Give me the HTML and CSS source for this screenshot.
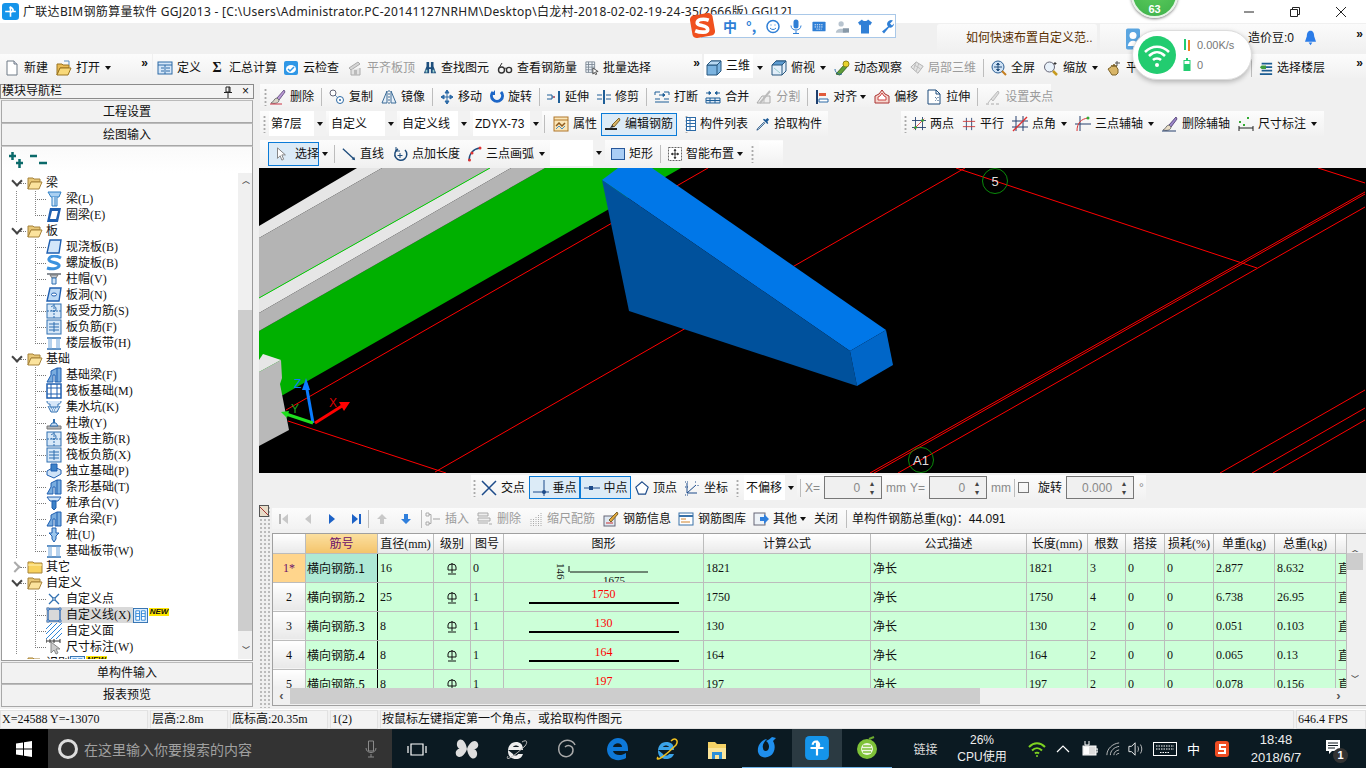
FILE: index.html
```html
<!DOCTYPE html>
<html lang="zh-CN">
<head>
<meta charset="utf-8">
<title>GGJ2013</title>
<link rel="stylesheet" href="styles.css">
</head>
<body>
<svg class="defs" xmlns="http://www.w3.org/2000/svg">
<symbol id="new" viewBox="0 0 16 16"><path d="M3 1h7l3 3v11H3z" fill="#fff" stroke="#6f7a86"/><path d="M10 1v3h3" fill="#dde" stroke="#6f7a86"/></symbol>
<symbol id="open" viewBox="0 0 16 16"><path d="M1 4h5l1 1h6v3H4l-3 7z" fill="#e9bb55" stroke="#9a7420"/><path d="M1 15l3-7h11l-3 7z" fill="#f8d97a" stroke="#9a7420"/><path d="M8 1h5v4" fill="none" stroke="#5a8fc0"/></symbol>
<symbol id="def" viewBox="0 0 16 16"><rect x="1" y="2" width="14" height="12" fill="#d5e6f8" stroke="#2c6aa6"/><path d="M1 5h14M4 8h3M4 11h3M9 8h4M9 11h4M8 5v9" stroke="#2c6aa6" fill="none"/></symbol>
<symbol id="cloud" viewBox="0 0 16 16"><rect x="1" y="1" width="14" height="14" rx="2" fill="#2f97e6"/><ellipse cx="8" cy="9" rx="5" ry="4" fill="#fff"/><path d="M5 9l2 2 4-4" stroke="#2f97e6" stroke-width="1.5" fill="none"/></symbol>
<symbol id="flush" viewBox="0 0 16 16"><path d="M2 8l9-6 2 2-9 6z" fill="#d6d6d6" stroke="#aaa"/><path d="M4 10v5h9V8" fill="#e2e2e2" stroke="#aaa"/><path d="M7 10h3v5H7z" fill="#bbb"/></symbol>
<symbol id="binoc" viewBox="0 0 16 16"><path d="M4 1h3v6h2V1h3v5l3 8H9V9H7v5H1l3-8z" fill="#1e4f7d"/><path d="M3 10h2v3H3zM11 10h2v3h-2z" fill="#9cc"/></symbol>
<symbol id="glass" viewBox="0 0 16 16"><circle cx="4.5" cy="10" r="3" fill="none" stroke="#333" stroke-width="1.4"/><circle cx="12" cy="10" r="2.6" fill="none" stroke="#333" stroke-width="1.4"/><path d="M7 9c1-1 2-1 3 0M2 8l3-5" stroke="#333" fill="none"/></symbol>
<symbol id="batch" viewBox="0 0 16 16"><path d="M1 1h10v12H1zM1 4h10M1 7h10M1 10h10M4 1v12M8 1v12" fill="#eef3f8" stroke="#7b8794"/><path d="M9 8l6 4-3 .5 1.500 2.500-1.500.5-1.500-2.500-1.500 2z" fill="#fff" stroke="#444"/></symbol>
<symbol id="cube" viewBox="0 0 16 16"><path d="M1 5l4-4h10v10l-4 4H1z" fill="#7cb4e0" stroke="#26567f"/><path d="M1 5h10v10M11 5l4-4" fill="none" stroke="#26567f"/><path d="M1 5l4-4h10l-4 4z" fill="#b9d9f2" stroke="#26567f"/></symbol>
<symbol id="cubet" viewBox="0 0 16 16"><path d="M1 5l4-4h10v10l-4 4H1z" fill="#e2eef9" stroke="#26567f"/><path d="M1 5l4-4h10l-4 4z" fill="#5d9bd0" stroke="#26567f"/><path d="M11 5v10" stroke="#26567f" fill="none"/><path d="M3 8l6 5" stroke="#9cc" fill="none"/></symbol>
<symbol id="orbit" viewBox="0 0 16 16"><path d="M2 14L11 4l3 2-8 9z" fill="#5f9e3a" stroke="#3b6a22"/><circle cx="12" cy="4" r="3" fill="#e8d22c" stroke="#8f8416"/><path d="M1 9c0 4 4 6 7 5" stroke="#2a6ea8" fill="none"/></symbol>
<symbol id="cubeg" viewBox="0 0 16 16"><path d="M1 7l6-6 8 5-6 8z" fill="#e3e3e3" stroke="#aaa"/><path d="M4 4l8 5M7 1l-3 9M10 3l-3 9" stroke="#bbb" fill="none"/></symbol>
<symbol id="full" viewBox="0 0 16 16"><circle cx="7" cy="7" r="6" fill="#cfe2f5" stroke="#2c5f94"/><path d="M7 3v8M3 7h8M7 3l-1.500 1.500h3zM7 11l-1.500-1.500h3z" stroke="#24507e" fill="#24507e"/><path d="M11 11l4 4" stroke="#c47d1e" stroke-width="2"/></symbol>
<symbol id="zoom" viewBox="0 0 16 16"><circle cx="6.500" cy="7" r="5" fill="#e8f1fa" stroke="#667"/><path d="M10 11l4 4" stroke="#c79a1e" stroke-width="2.500"/><path d="M12 2v3M10.500 3.500h3" stroke="#333"/></symbol>
<symbol id="hand" viewBox="0 0 16 16"><path d="M2 9l3-2 1-2 1 2 1-3 1 3 1-2 1 3 1 1v4l-2 2H6z" fill="#d8b568" stroke="#7d6228"/><path d="M11 1v5M9 3h5" stroke="#555"/></symbol>
<symbol id="floor" viewBox="0 0 16 16"><path d="M3 3h12M3 7h12M3 11h12M1 15h14" stroke="#1c5d92" stroke-width="2" fill="none"/><path d="M8 5H3l-2 2 2 2h5z" fill="#3d9b3d"/></symbol>
<symbol id="del" viewBox="0 0 16 16"><path d="M14 1L7 9l2 2 6-8z" fill="#bb9ad6" stroke="#6e5a8a"/><path d="M7 9c-3 0-3 4-6 5 4 1 8 0 8-3z" fill="#d9d4c8" stroke="#777"/><path d="M0 15h12" stroke="#c34"/></symbol>
<symbol id="copy" viewBox="0 0 16 16"><circle cx="4" cy="4" r="3" fill="#fff" stroke="#667"/><circle cx="11" cy="11" r="3.500" fill="#fff" stroke="#2c6aa6"/><path d="M6 6l3 3" stroke="#2c6aa6" stroke-dasharray="1 1"/><circle cx="11" cy="11" r="1" fill="#2c6aa6"/></symbol>
<symbol id="mirror" viewBox="0 0 16 16"><path d="M1 14l5-12v12zM15 14L10 2v12z" fill="#e8f1fa" stroke="#3a6a96"/><path d="M8 1v14" stroke="#3a6a96" stroke-dasharray="2 1"/></symbol>
<symbol id="move" viewBox="0 0 14 16"><path d="M7 1v14M1 8h12M7 1L5 4h4zM7 15l-2-3h4zM1 8l3-2v4zM13 8l-3-2v4z" fill="#2c6aa6" stroke="#2c6aa6"/></symbol>
<symbol id="rotate" viewBox="0 0 14 16"><path d="M3 3a5.500 5.500 0 1 0 8 0" fill="none" stroke="#1d66c7" stroke-width="3"/><path d="M5 1v5H1z" fill="#1d66c7"/></symbol>
<symbol id="extend" viewBox="0 0 14 16"><path d="M0 6h5v4H0M8 8H5" stroke="#1e5e97" fill="none"/><path d="M12 2v12" stroke="#1e5e97" stroke-width="2"/><path d="M6 8h2" stroke="#d33"/></symbol>
<symbol id="trim" viewBox="0 0 14 16"><path d="M7 1v14" stroke="#1e5e97" stroke-width="2"/><path d="M0 6h5M0 10h5M9 6h5M9 10h5" stroke="#1e5e97"/></symbol>
<symbol id="brk" viewBox="0 0 16 16"><path d="M1 3h5M10 3h5M1 3v3M15 3v3M1 10h5M10 10h5M1 13h14" stroke="#1e5e97" fill="none"/><path d="M5 6h6M11 6L9 4.500v3z" stroke="#1e5e97" fill="#1e5e97"/></symbol>
<symbol id="merge" viewBox="0 0 16 16"><path d="M1 9h14v5H1zM1 11.500h14M5 9v5M10 9v5" fill="#dbe8f5" stroke="#1e5e97"/><path d="M1 4h5M15 4h-5M6 4L4 2.500v3zM10 4l2-1.500v3z" stroke="#1e5e97" fill="#1e5e97"/></symbol>
<symbol id="split" viewBox="0 0 16 16"><path d="M1 14h13V7H6z" fill="#eee" stroke="#aaa"/><path d="M4 14l10-12" stroke="#bbb" stroke-width="2"/><path d="M8 7v7" stroke="#bbb"/></symbol>
<symbol id="align" viewBox="0 0 14 16"><path d="M2 1v14" stroke="#1e3f6e" stroke-width="2"/><path d="M4 4h7v3H4z" fill="#e05a3a"/><path d="M4 10h9v3H4z" fill="#fff" stroke="#2c6aa6"/></symbol>
<symbol id="offset" viewBox="0 0 16 16"><path d="M8 1l3 4 4 2v7H1V7l4-2z" fill="#f5d5cd" stroke="#a33"/><path d="M8 4l2 3 2 1v3H4V8l2-1z" fill="#fff" stroke="#c44"/></symbol>
<symbol id="stretch" viewBox="0 0 16 16"><path d="M2 1h8l4 4v10H2z" fill="#fff" stroke="#1d4b7b"/><path d="M10 1v4h4" fill="none" stroke="#1d4b7b"/><path d="M9 8l2 2-2 2M12 8v1M12 11v1" stroke="#1d4b7b" fill="none" stroke-dasharray="1 1"/></symbol>
<symbol id="setp" viewBox="0 0 16 16"><path d="M13 2L6 10l2 2 6-8z" fill="#ddd" stroke="#bbb"/><path d="M1 15h3M6 15h3M11 15h3" stroke="#aaa"/><path d="M6 10l-3 4" stroke="#bbb"/></symbol>
<symbol id="attr" viewBox="0 0 16 16"><rect x="1" y="1" width="14" height="14" fill="#fbe6b8" stroke="#b0762a"/><path d="M1 4h14" stroke="#b0762a"/><path d="M3 10l3-3 3 3 3-3" stroke="#8f5a1d" stroke-width="1.500" fill="none"/><path d="M3 13l3-3 3 3 3-3" stroke="#4d8fbf" fill="none"/></symbol>
<symbol id="edit" viewBox="0 0 16 16"><path d="M14 2L7 9l2 2 6-7z" fill="#d8b568" stroke="#7d6228"/><path d="M7 9l-2 3 4-1z" fill="#333"/><path d="M0 13h12" stroke="#222" stroke-width="2"/></symbol>
<symbol id="list" viewBox="0 0 10 16"><rect x=".5" y="1.500" width="9" height="13" fill="#fff" stroke="#2c6aa6"/><path d="M.5 4.500h9M.5 7.500h9M.5 10.500h9M4 1.500v13" stroke="#2c6aa6"/></symbol>
<symbol id="pick" viewBox="0 0 16 16"><path d="M9 6l-7 7-1 2 2-1 7-7z" fill="#dcecf9" stroke="#1d4b7b"/><path d="M8 3l5 5 1-1-1-2 2-2-2-2-2 2-2-1z" fill="#1d5a96"/></symbol>
<symbol id="twop" viewBox="0 0 16 16"><path d="M4 0v15M12 0v15M0 4h16M0 12h16" stroke="#26406e"/><path d="M2 14L14 2" stroke="#d33"/><circle cx="4" cy="12" r="1.500" fill="#3a3"/><circle cx="12" cy="4" r="1.500" fill="#3a3"/></symbol>
<symbol id="para" viewBox="0 0 16 16"><path d="M5 1v14M11 1v14" stroke="#26406e"/><path d="M1 5h14M1 11h14" stroke="#c33"/></symbol>
<symbol id="angle" viewBox="0 0 16 16"><path d="M4 0v15M11 0v15M0 5h16M0 11h16" stroke="#26406e"/><path d="M1 15L15 1" stroke="#d33" stroke-width="1.500"/></symbol>
<symbol id="arc3" viewBox="0 0 16 16"><path d="M5 0v15M0 8h16" stroke="#26406e"/><path d="M2 15c0-8 4-12 11-13" stroke="#d33" fill="none"/><circle cx="13" cy="2" r="1.500" fill="#3a3"/></symbol>
<symbol id="delax" viewBox="0 0 16 16"><path d="M14 1L7 9l2 2 6-8z" fill="#9c86c9" stroke="#5d4b80"/><path d="M7 9c-3 0-3 4-6 5 4 1 8 0 8-3z" fill="#e8dcc4" stroke="#777"/><path d="M0 15h14" stroke="#26406e"/></symbol>
<symbol id="dim" viewBox="0 0 16 16"><path d="M1 12h14M1 10v5M15 10v5" stroke="#222"/><rect x="1" y="5" width="2" height="2" fill="#3a3"/><rect x="9" y="1" width="2" height="2" fill="#3a3"/><rect x="5" y="8" width="2" height="2" fill="#3a3"/></symbol>
<symbol id="cursor" viewBox="0 0 16 16"><path d="M4 1v12l3-3 2 5 2-1-2-5h4z" fill="#fff" stroke="#777"/></symbol>
<symbol id="line" viewBox="0 0 16 16"><path d="M1 2l13 12" stroke="#1d4b7b" stroke-width="1.500"/><path d="M15 15l-4-1 3-3z" fill="#1d4b7b"/></symbol>
<symbol id="ptlen" viewBox="0 0 16 16"><path d="M6 3a6 6 0 1 0 7 1" fill="none" stroke="#1d4b7b" stroke-width="1.500"/><path d="M4 1v4h4" stroke="#1d4b7b" fill="none"/><path d="M8 7v5M5.500 9.500h5" stroke="#1d4b7b"/></symbol>
<symbol id="arc" viewBox="0 0 14 16"><path d="M1 15C1 8 5 3 12 2" stroke="#1d4b7b" stroke-width="1.500" fill="none"/><circle cx="12" cy="2" r="1.500" fill="#d33"/><circle cx="4" cy="7" r="1.500" fill="#d33"/><circle cx="1.500" cy="14" r="1.500" fill="#d33"/></symbol>
<symbol id="rect" viewBox="0 0 14 16"><rect x="0.500" y="2.500" width="13" height="11" fill="#a9cdf5" stroke="#26579a"/></symbol>
<symbol id="smart" viewBox="0 0 14 16"><rect x="0.500" y="1.500" width="13" height="13" fill="#fff" stroke="#666" stroke-dasharray="2 1"/><path d="M7 3v10M3 8h8" stroke="#333"/><path d="M7 3L5.500 5h3zM7 13l-1.500-2h3zM3 8l2-1.500v3zM11 8L9 6.500v3z" fill="#333"/></symbol>
<symbol id="cross" viewBox="0 0 16 16"><path d="M1 1l14 14M15 1L1 15" stroke="#1d4b8a" stroke-width="1.500"/></symbol>
<symbol id="perp" viewBox="0 0 16 16"><path d="M0 12h16M11 0v16" stroke="#1d4b8a"/><circle cx="11" cy="12" r="2" fill="#1d4b8a"/></symbol>
<symbol id="mid" viewBox="0 0 16 16"><path d="M0 8h16" stroke="#1d4b8a"/><rect x="5" y="6" width="4" height="4" fill="#1d4b8a"/></symbol>
<symbol id="vert" viewBox="0 0 16 16"><path d="M8 1l7 6-3 8H4L1 7z" fill="#fff" stroke="#1d4b8a" stroke-width="1.400"/></symbol>
<symbol id="coord" viewBox="0 0 16 16"><path d="M3 13h10M3 3v10M3 13L12 5" stroke="#1d4b8a" fill="none"/><path d="M1 2h3M1 7h3M1 15h3M11 2h2M14 5v2" stroke="#1d4b8a" stroke-dasharray="1 1"/></symbol>
<symbol id="folder" viewBox="0 0 16 14"><path d="M1 2h5l1 1h6v3H4L1 13z" fill="#e8c777" stroke="#a6833b"/><path d="M1 13l3-7h11l-3 7z" fill="#fbe39d" stroke="#a6833b"/></symbol>
<symbol id="folderc" viewBox="0 0 16 14"><path d="M1 2h5l1 1h8v10H1z" fill="#f8d25e" stroke="#a6833b"/><path d="M1 5h14" stroke="#fff3b8"/></symbol>
<symbol id="beam" viewBox="0 0 16 16"><path d="M2 1h13l-2 5H5z" fill="#a9d0f2" stroke="#2f7fc4"/><path d="M6 6v9h5V6" fill="#d9ebfa" stroke="#2f7fc4"/><path d="M9 6v9" stroke="#2f7fc4"/></symbol>
<symbol id="ring" viewBox="0 0 16 16"><path d="M4 1h11l-3 14H1z" fill="#1f5fb0"/><path d="M6 4h6l-2 8H4z" fill="#fff"/></symbol>
<symbol id="slab" viewBox="0 0 16 16"><path d="M4 1h11l-2 13H1z" fill="#d3e6f9" stroke="#1f5fb0" stroke-width="1.400"/></symbol>
<symbol id="spiral" viewBox="0 0 16 16"><path d="M15 3C8-1 2 2 3 5c1 3 8 2 10 5 1 3-6 5-12 3" fill="none" stroke="#3c92de" stroke-width="3"/></symbol>
<symbol id="cap" viewBox="0 0 16 16"><path d="M1 2h14v2H1z" fill="#8a8f96"/><path d="M4 4h8l-2 3H6z" fill="#c5c9ce" stroke="#777"/><path d="M6 7h4v6H6z" fill="#cfe3f7" stroke="#2f6fb0"/></symbol>
<symbol id="hole" viewBox="0 0 16 16"><path d="M4 1h11l-2 13H1z" fill="#bcd9f5" stroke="#1f5fb0" stroke-width="1.400"/><ellipse cx="8" cy="7.500" rx="2.500" ry="1.500" fill="#fff" stroke="#1f5fb0"/></symbol>
<symbol id="sfr" viewBox="0 0 16 16"><rect x="1" y="1" width="14" height="14" fill="#d7e8f8" stroke="#2f6fb0"/><path d="M8 1v14M1 8h14" stroke="#2f6fb0" stroke-dasharray="2 1"/><path d="M5 4c2-2 5-1 5 2s-3 3-5 1" fill="none" stroke="#2f6fb0"/></symbol>
<symbol id="nfr" viewBox="0 0 16 16"><rect x="1" y="1" width="14" height="14" fill="#d7e8f8" stroke="#2f6fb0"/><path d="M3 8h10M8 3v10M3 5h10M3 11h10" stroke="#2f6fb0"/></symbol>
<symbol id="band" viewBox="0 0 16 16"><path d="M1 3h14M1 14h14" stroke="#2f6fb0" stroke-width="1.500"/><path d="M5 3v11M11 3v11M3 3v11M13 3v11" stroke="#6ea5dc"/></symbol>
<symbol id="fbeam" viewBox="0 0 16 16"><path d="M1 15l4-7V4l6-3h4v14H9V8H7v7z" fill="#79acde" stroke="#1f5fb0"/><path d="M11 1v14" stroke="#1f5fb0"/></symbol>
<symbol id="raft" viewBox="0 0 16 16"><rect x="1" y="1" width="14" height="14" fill="#fff" stroke="#1f5fb0" stroke-width="1.500"/><path d="M5 1v14M11 1v14M1 5h14M1 11h14" stroke="#1f5fb0"/></symbol>
<symbol id="pit" viewBox="0 0 16 16"><path d="M1 2c0 3 2 3 3 3v3h8V5c1 0 3 0 3-3M2 7l3 6h6l3-6" fill="#d5e6f8" stroke="#2f6fb0"/><path d="M5 9h6M6 11h4" stroke="#2f6fb0" stroke-dasharray="1 1"/></symbol>
<symbol id="pier" viewBox="0 0 16 16"><path d="M1 11h14v3H1z" fill="#b4b7bb" stroke="#777"/><path d="M4 11l2-3h4l2 3z" fill="#cfe3f7" stroke="#2f6fb0"/><path d="M7 4h2v4H7z" fill="#2f6fb0"/></symbol>
<symbol id="iso" viewBox="0 0 16 16"><path d="M1 8l7-4 7 3v4l-7 4-7-3z" fill="#cfe3f7" stroke="#1f5fb0"/><path d="M5 1h6v7H5z" fill="#3d82c8" stroke="#1f5fb0"/></symbol>
<symbol id="pcap" viewBox="0 0 16 16"><path d="M1 2h14l-3 4H4z" fill="#cfe3f7" stroke="#1f5fb0"/><path d="M6 6h4v7l-2 2-2-2z" fill="#3d82c8" stroke="#1f5fb0"/></symbol>
<symbol id="pile" viewBox="0 0 16 16"><path d="M6 1h4v5h3l-3 3v3l-2 3-2-3V9L3 6h3z" fill="#9cc6ec" stroke="#1f5fb0"/></symbol>
<symbol id="pt" viewBox="0 0 16 16"><path d="M3 3l10 10M13 3L3 13" stroke="#2f6fb0" stroke-width="1.300"/><circle cx="8" cy="8" r="1.300" fill="#fff" stroke="#2f6fb0"/></symbol>
<symbol id="cline" viewBox="0 0 16 16"><rect x="2" y="2" width="12" height="12" fill="none" stroke="#1f5fb0" stroke-width="1.200"/><path d="M1 1h2v2H1zM13 1h2v2h-2zM1 13h2v2H1zM13 13h2v2h-2z" fill="#fff" stroke="#1f5fb0" stroke-width=".8"/></symbol>
<symbol id="cface" viewBox="0 0 16 16"><path d="M0 6l6-6M0 11L11 0M0 16L16 0M5 16L16 5M10 16l6-6" stroke="#2f86d8"/></symbol>
<symbol id="cdim" viewBox="0 0 16 16"><path d="M0 2h14M0 0v4M14 0v4M4 0v4M8 0v4" stroke="#333"/><path d="M5 3v11l3-3 2 4 2-1-2-4h4z" fill="#ccc" stroke="#888"/></symbol>
<symbol id="mini" viewBox="0 0 16 16"><rect x=".5" y=".5" width="15" height="15" fill="#dceeff" stroke="#2f6fb0"/><path d="M3 3h4v10H3zM9 3h4v10H9z" fill="#fff" stroke="#2f86d8"/><path d="M3 6h4M3 9h4M9 6h4M9 9h4" stroke="#2f86d8"/></symbol>
<symbol id="first" viewBox="0 0 12 12"><path d="M2 1v10" stroke="#b8b8b8" stroke-width="2"/><path d="M10 1v10L4 6z" fill="#c8c8c8"/></symbol>
<symbol id="prev" viewBox="0 0 12 12"><path d="M9 1v10L3 6z" fill="#c8c8c8"/></symbol>
<symbol id="next" viewBox="0 0 12 12"><path d="M3 1v10l6-5z" fill="#1d62c6"/></symbol>
<symbol id="last" viewBox="0 0 12 12"><path d="M10 1v10" stroke="#1d62c6" stroke-width="2"/><path d="M2 1v10l6-5z" fill="#1d62c6"/></symbol>
<symbol id="up" viewBox="0 0 12 12"><path d="M6 1l5 5H8v5H4V6H1z" fill="#c8c8c8"/></symbol>
<symbol id="down" viewBox="0 0 12 12"><path d="M6 11l5-5H8V1H4v5H1z" fill="#2f7fdc"/></symbol>
<symbol id="ins" viewBox="0 0 16 16"><path d="M1 2h3v3H1zM1 11h3v3H1z" fill="none" stroke="#aaa"/><path d="M4 3.500h2v9H4" fill="none" stroke="#aaa"/><path d="M8 7h7v2H8z" fill="#ccc"/></symbol>
<symbol id="del2" viewBox="0 0 16 16"><path d="M1 2h10v3H1zM1 7h12v3H1zM1 12h10" fill="#eee" stroke="#aaa"/><path d="M12 13h3" stroke="#aaa"/></symbol>
<symbol id="scale" viewBox="0 0 12 16"><path d="M1 15V8M3.500 15V7M6 15V5M8.500 15V3M11 15V1" stroke="#aaa" stroke-dasharray="1 1"/></symbol>
<symbol id="info" viewBox="0 0 16 16"><rect x="1" y="5" width="11" height="10" fill="#dfe8f2" stroke="#667"/><path d="M14 1L6 9l2 2 7-8z" fill="#e0a73b" stroke="#7d6228"/><path d="M3 12h7" stroke="#c33"/></symbol>
<symbol id="lib" viewBox="0 0 16 16"><rect x="1" y="2" width="14" height="12" fill="#fff" stroke="#3a72a8"/><path d="M1 5h14" stroke="#3a72a8" stroke-width="2"/><path d="M3 8h5M3 11h9" stroke="#d0842c"/></symbol>
<symbol id="other" viewBox="0 0 16 16"><rect x="1" y="2" width="11" height="12" fill="#eef3f8" stroke="#667"/><path d="M7 6h4V3l5 5-5 5v-3H7z" fill="#2f7fdc"/></symbol>
</svg>

<header class="titlebar">
  <svg class="applogo" viewBox="0 0 16 16"><rect width="16" height="16" rx="3" fill="#1594ea"/><path d="M8 3v10M3 8h4a2 2 0 1 0 0-3M13 8H9" stroke="#fff" stroke-width="1.500" fill="none"/></svg>
  <span class="apptitle">广联达BIM钢筋算量软件 GGJ2013 - [C:\Users\Administrator.PC-20141127NRHM\Desktop\白龙村-2018-02-02-19-24-35(2666版).GGJ12]</span>
  <div class="winctl">
    <svg class="wbtn" viewBox="0 0 12 12"><path d="M1 6h10" stroke="#222"/></svg>
    <svg class="wbtn" viewBox="0 0 12 12"><path d="M1.500 3.500h7v7h-7zM3.500 3.500v-2h7v7h-2" fill="none" stroke="#222"/></svg>
    <svg class="wbtn" viewBox="0 0 12 12"><path d="M1 1l10 10M11 1L1 11" stroke="#222"/></svg>
  </div>
</header>

<div class="topband">
  <div class="newstab">如何快速布置自定义范..</div>
  <div class="coins">
    <svg class="userbadge" viewBox="0 0 16 24"><rect width="16" height="24" rx="2" fill="#5aa5e0"/><circle cx="8" cy="8" r="4" fill="#fff"/><path d="M2 20c1-8 11-8 12 0z" fill="#fff"/></svg>
    <span class="coinlabel">造价豆:0</span>
    <svg class="bell" viewBox="0 0 12 16"><path d="M6 0c3 0 4 3 4 6l2 6H0l2-6c0-3 1-6 4-6zM4 13h4l-2 3z" fill="#2b7ce8"/></svg>
    <span class="more morer">»</span>
  </div>
</div>

<div class="tb1">
  <div class="grp g-a">
    <span class="it"><svg class="ic"><use href="#new"/></svg>新建</span>
    <span class="it"><svg class="ic"><use href="#open"/></svg>打开<i class="ar"></i></span>
    <span class="more">»</span>
  </div>
  <div class="grp g-b">
    <span class="it"><svg class="ic"><use href="#def"/></svg>定义</span>
    <span class="it"><span class="ic sigma">Σ</span>汇总计算</span>
    <span class="it mln2"><svg class="ic"><use href="#cloud"/></svg>云检查</span>
    <span class="it off"><svg class="ic"><use href="#flush"/></svg>平齐板顶</span>
    <span class="it"><svg class="ic n"><use href="#binoc"/></svg>查找图元</span>
    <span class="it"><svg class="ic"><use href="#glass"/></svg>查看钢筋量</span>
    <span class="it"><svg class="ic n"><use href="#batch"/></svg>批量选择</span>
    <span class="more">»</span>
  </div>
  <div class="grp g-c">
    <span class="it fieldit"><svg class="ic"><use href="#cube"/></svg>三维</span><i class="ar ar-b"></i>
    <span class="it"><svg class="ic"><use href="#cubet"/></svg>俯视<i class="ar"></i></span>
    <span class="it"><svg class="ic"><use href="#orbit"/></svg>动态观察</span>
    <span class="it off"><svg class="ic n"><use href="#cubeg"/></svg>局部三维</span>
    <i class="sep"></i>
    <span class="it"><svg class="ic"><use href="#full"/></svg>全屏</span>
    <span class="it"><svg class="ic"><use href="#zoom"/></svg>缩放<i class="ar"></i></span>
    <span class="it"><svg class="ic"><use href="#hand"/></svg>平移</span>
    <i class="sep floorsep"></i>
    <span class="it"><svg class="ic n"><use href="#floor"/></svg>选择楼层</span>
    <span class="more">»</span>
  </div>
</div>

<main class="main">
  <aside class="side">
    <div class="navtitle"><span>模块导航栏</span><span class="navbtns"><svg class="pin" viewBox="0 0 10 12"><path d="M3 1h4v5H3zM1 6.500h8M5 7v5M6 1v5" fill="none" stroke="#222"/></svg><b>×</b></span></div>
    <div class="navbtn">工程设置</div>
    <div class="navbtn">绘图输入</div>
    <div class="treebox">
      <div class="treetools">
        <svg class="tt" viewBox="0 0 20 16"><path d="M3 4h7M6.500 0v8M10 11h7M13.500 7v9" stroke="#0b6a6a" stroke-width="2.500"/></svg>
        <svg class="tt" viewBox="0 0 20 16"><path d="M1 4h7M10 11h8" stroke="#0b6a6a" stroke-width="2.500"/></svg>
      </div>
      <div class="treearea">
        <div class="tree">
          <div class="pnode"><span class="chev"></span><i class="hc"></i><svg class="fld"><use href="#folder"/></svg>梁</div>
          <div class="kids">
            <div class="leaf"><i class="conn"></i><svg class="lic"><use href="#beam"/></svg>梁(L)</div>
            <div class="leaf last"><i class="conn"></i><svg class="lic"><use href="#ring"/></svg>圈梁(E)</div>
          </div>
          <div class="pnode"><span class="chev"></span><i class="hc"></i><svg class="fld"><use href="#folder"/></svg>板</div>
          <div class="kids">
            <div class="leaf"><i class="conn"></i><svg class="lic"><use href="#slab"/></svg>现浇板(B)</div>
            <div class="leaf"><i class="conn"></i><svg class="lic"><use href="#spiral"/></svg>螺旋板(B)</div>
            <div class="leaf"><i class="conn"></i><svg class="lic"><use href="#cap"/></svg>柱帽(V)</div>
            <div class="leaf"><i class="conn"></i><svg class="lic"><use href="#hole"/></svg>板洞(N)</div>
            <div class="leaf"><i class="conn"></i><svg class="lic"><use href="#sfr"/></svg>板受力筋(S)</div>
            <div class="leaf"><i class="conn"></i><svg class="lic"><use href="#nfr"/></svg>板负筋(F)</div>
            <div class="leaf last"><i class="conn"></i><svg class="lic"><use href="#band"/></svg>楼层板带(H)</div>
          </div>
          <div class="pnode"><span class="chev"></span><i class="hc"></i><svg class="fld"><use href="#folder"/></svg>基础</div>
          <div class="kids">
            <div class="leaf"><i class="conn"></i><svg class="lic"><use href="#fbeam"/></svg>基础梁(F)</div>
            <div class="leaf"><i class="conn"></i><svg class="lic"><use href="#raft"/></svg>筏板基础(M)</div>
            <div class="leaf"><i class="conn"></i><svg class="lic"><use href="#pit"/></svg>集水坑(K)</div>
            <div class="leaf"><i class="conn"></i><svg class="lic"><use href="#pier"/></svg>柱墩(Y)</div>
            <div class="leaf"><i class="conn"></i><svg class="lic"><use href="#sfr"/></svg>筏板主筋(R)</div>
            <div class="leaf"><i class="conn"></i><svg class="lic"><use href="#nfr"/></svg>筏板负筋(X)</div>
            <div class="leaf"><i class="conn"></i><svg class="lic"><use href="#iso"/></svg>独立基础(P)</div>
            <div class="leaf"><i class="conn"></i><svg class="lic"><use href="#fbeam"/></svg>条形基础(T)</div>
            <div class="leaf"><i class="conn"></i><svg class="lic"><use href="#pcap"/></svg>桩承台(V)</div>
            <div class="leaf"><i class="conn"></i><svg class="lic"><use href="#fbeam"/></svg>承台梁(F)</div>
            <div class="leaf"><i class="conn"></i><svg class="lic"><use href="#pile"/></svg>桩(U)</div>
            <div class="leaf last"><i class="conn"></i><svg class="lic"><use href="#band"/></svg>基础板带(W)</div>
          </div>
          <div class="pnode"><span class="chev closed"></span><i class="hc"></i><svg class="fld"><use href="#folderc"/></svg>其它</div>
          <div class="pnode"><span class="chev"></span><i class="hc"></i><svg class="fld"><use href="#folder"/></svg>自定义</div>
          <div class="kids">
            <div class="leaf"><i class="conn"></i><svg class="lic"><use href="#pt"/></svg>自定义点</div>
            <div class="leaf"><i class="conn"></i><span class="selrow"><svg class="lic"><use href="#cline"/></svg>自定义线(X)</span><svg class="minii"><use href="#mini"/></svg><span class="newtag">NEW</span></div>
            <div class="leaf"><i class="conn"></i><svg class="lic"><use href="#cface"/></svg>自定义面</div>
            <div class="leaf last"><i class="conn"></i><svg class="lic"><use href="#cdim"/></svg>尺寸标注(W)</div>
          </div>
          <div class="pnode"><span class="chev"></span><i class="hc"></i><svg class="fld"><use href="#folder"/></svg>识别<svg class="minii"><use href="#mini"/></svg><span class="newtag">NEW</span></div>
        </div>
        <div class="vbar">
          <span class="up-a">︿</span>
          <div class="vtrack"><div class="vthumb"></div></div>
          <span class="dn-a">﹀</span>
        </div>
      </div>
    </div>
    <div class="navbtn lowerbtn">单构件输入</div>
    <div class="navbtn lowerbtn">报表预览</div>
  </aside>

  <section class="work">
    <div class="row2">
      <div class="grp g-edit">
        <i class="grip"></i>
        <span class="it"><svg class="ic"><use href="#del"/></svg>删除</span><i class="sep"></i>
        <span class="it"><svg class="ic"><use href="#copy"/></svg>复制</span>
        <span class="it"><svg class="ic"><use href="#mirror"/></svg>镜像</span><i class="sep"></i>
        <span class="it"><svg class="ic n"><use href="#move"/></svg>移动</span>
        <span class="it"><svg class="ic n"><use href="#rotate"/></svg>旋转</span><i class="sep"></i>
        <span class="it"><svg class="ic n"><use href="#extend"/></svg>延伸</span>
        <span class="it"><svg class="ic n"><use href="#trim"/></svg>修剪</span><i class="sep"></i>
        <span class="it"><svg class="ic"><use href="#brk"/></svg>打断</span>
        <span class="it mln1"><svg class="ic"><use href="#merge"/></svg>合并</span>
        <span class="it off mln1"><svg class="ic"><use href="#split"/></svg>分割</span><i class="sep"></i>
        <span class="it"><svg class="ic n"><use href="#align"/></svg>对齐<i class="ar tight"></i></span>
        <span class="it"><svg class="ic"><use href="#offset"/></svg>偏移</span>
        <span class="it"><svg class="ic"><use href="#stretch"/></svg>拉伸</span><i class="sep"></i>
        <span class="it off"><svg class="ic"><use href="#setp"/></svg>设置夹点</span>
      </div>
    </div>
    <div class="row3">
      <div class="grp g-layer">
        <i class="grip grip-first"></i>
        <span class="combo c1"><span class="cv">第7层</span><span class="ca"><i class="ar"></i></span></span>
        <span class="combo c2"><span class="cv">自定义</span><span class="ca"><i class="ar"></i></span></span>
        <span class="combo c6"><span class="cv">自定义线</span><span class="ca"><i class="ar"></i></span></span>
        <span class="combo c3"><span class="cv">ZDYX-73</span><span class="ca"><i class="ar"></i></span></span>
        <i class="sep"></i>
        <span class="it"><svg class="ic"><use href="#attr"/></svg>属性</span>
        <span class="it toggled"><svg class="ic"><use href="#edit"/></svg>编辑钢筋</span>
        <i class="grip"></i>
        <span class="it listit"><svg class="ic x10"><use href="#list"/></svg>构件列表</span>
        <span class="it"><svg class="ic n"><use href="#pick"/></svg>拾取构件</span>
      </div>
      <div class="grp g-axis">
        <i class="grip"></i>
        <span class="it axisfirst"><svg class="ic n"><use href="#twop"/></svg>两点</span>
        <span class="it"><svg class="ic n"><use href="#para"/></svg>平行</span>
        <span class="it"><svg class="ic"><use href="#angle"/></svg>点角<i class="ar"></i></span>
        <span class="it"><svg class="ic"><use href="#arc3"/></svg>三点辅轴<i class="ar"></i></span>
        <span class="it"><svg class="ic"><use href="#delax"/></svg>删除辅轴</span>
        <span class="it"><svg class="ic"><use href="#dim"/></svg>尺寸标注<i class="ar"></i></span>
      </div>
    </div>
    <div class="row4">
      <div class="grp g-draw">
        <span class="it toggled sel-btn"><svg class="ic n"><use href="#cursor"/></svg>选择</span><i class="ar ar-s"></i><i class="sep"></i>
        <span class="it"><svg class="ic n"><use href="#line"/></svg>直线</span>
        <span class="it"><svg class="ic"><use href="#ptlen"/></svg>点加长度</span>
        <span class="it"><svg class="ic n"><use href="#arc"/></svg>三点画弧<i class="ar"></i></span>
        <span class="combo c4"><span class="cv"></span><span class="ca"><i class="ar"></i></span></span>
        <span class="it"><svg class="ic n"><use href="#rect"/></svg>矩形</span><i class="sep"></i>
        <span class="it"><svg class="ic n"><use href="#smart"/></svg>智能布置<i class="ar tight"></i></span>
        <i class="grip"></i><span class="blankbox"></span>
      </div>
    </div>

    <svg class="canvas" viewBox="259 168 1107 305" xmlns="http://www.w3.org/2000/svg">
      <rect x="259" y="168" width="1107" height="305" fill="#000"/>
      <g stroke="#f00" stroke-width="1" fill="none">
        <path d="M286 410L708 168M435 472L965 168M288 421L446 473M956 168L1257 268M1318 168L1365 183"/>
        <path d="M870 473L1365 192M874 473L1365 194M898 473L1365 207M1220 473L1365 390M1252 473L1365 408M1273 473L1365 420"/>
      </g>
      <path d="M545 168H681L283 395 262 400 259 402V331z" fill="#00b000"/>
      <path d="M259 226L357 168H382L259 238z" fill="#e6e6e6"/>
      <path d="M259 238L382 168H490L259 298z" fill="#b4b4b4"/>
      <path d="M259 298L490 168H511L259 313z" fill="#e6e6e6"/>
      <path d="M259 313L511 168H545L259 331z" fill="#b4b4b4"/>
      <path d="M259 298L490 168" stroke="#00d000" stroke-width="1"/>
      <path d="M259 360L263 354 281 360 259 372z" fill="#e6e6e6"/>
      <path d="M259 372L281 360 282 378 280 384 289 430 259 446z" fill="#b9b9b9"/>
      <path d="M602 180L618 168H652L886 330 850 351z" fill="#0077e8"/>
      <path d="M602 180L850 351 857 386 629 311z" fill="#00519c"/>
      <path d="M850 351L886 330 893 365 857 386z" fill="#0066c8"/>
      <path d="M313 423L306 384" stroke="#0a7cff" stroke-width="3"/>
      <path d="M306 378L302 390H310z" fill="#0a7cff"/>
      <path d="M315 423L342 406" stroke="#f00" stroke-width="3"/>
      <path d="M350 402L339 402 344 411z" fill="#f00"/>
      <path d="M313 423L286 414" stroke="#1fe01f" stroke-width="3"/>
      <path d="M281 412L289 411 287 418z" fill="#1fe01f"/>
      <text x="294" y="388" class="ax axz">Z</text>
      <text x="291" y="413" class="ax axy">Y</text>
      <text x="329" y="407" class="ax axx">X</text>
      <circle cx="995" cy="181" r="12.500" fill="none" stroke="#0a8a0a"/>
      <text x="995" y="186" class="gridlabel">5</text>
      <circle cx="921" cy="460" r="12.500" fill="none" stroke="#0a8a0a"/>
      <text x="921" y="465" class="gridlabel">A1</text>
    </svg>

    <div class="snapwrap">
      <div class="grp g-snap">
        <i class="grip"></i>
        <span class="it"><svg class="ic"><use href="#cross"/></svg>交点</span>
        <span class="it toggled sn"><svg class="ic"><use href="#perp"/></svg>垂点</span>
        <span class="it toggled sn"><svg class="ic"><use href="#mid"/></svg>中点</span>
        <span class="it"><svg class="ic n"><use href="#vert"/></svg>顶点</span>
        <span class="it coordit"><svg class="ic"><use href="#coord"/></svg>坐标</span>
        <i class="grip gs2"></i>
        <span class="combo c5"><span class="cv">不偏移</span><span class="ca"><i class="ar"></i></span></span>
        <i class="sep"></i>
        <span class="lbl xlbl">X=</span><span class="spin w58"><span class="spv">0</span><span class="spa"><i>▴</i><i>▾</i></span></span>
        <span class="lbl">mm</span><span class="lbl">Y=</span><span class="spin w58"><span class="spv">0</span><span class="spa"><i>▴</i><i>▾</i></span></span>
        <span class="lbl">mm</span><i class="sep"></i><i class="chk"></i>
        <span class="rotlbl">旋转</span><span class="spin w68"><span class="spv">0.000</span><span class="spa"><i>▴</i><i>▾</i></span></span>
        <span class="lbl deg">°</span>
      </div>
    </div>

    <div class="lower">
      <div class="gutter"><span class="gutx"></span></div>
      <div class="lowermain">
        <div class="grp g-bar">
          <svg class="ic12"><use href="#first"/></svg>
          <svg class="ic12"><use href="#prev"/></svg>
          <svg class="ic12"><use href="#next"/></svg>
          <svg class="ic12"><use href="#last"/></svg>
          <i class="sep s1"></i>
          <svg class="ic12"><use href="#up"/></svg>
          <svg class="ic12"><use href="#down"/></svg>
          <i class="sep s2"></i>
          <span class="it off"><svg class="ic"><use href="#ins"/></svg>插入</span>
          <span class="it off"><svg class="ic"><use href="#del2"/></svg>删除</span>
          <span class="it off"><svg class="ic n"><use href="#scale"/></svg>缩尺配筋</span>
          <span class="it"><svg class="ic"><use href="#info"/></svg>钢筋信息</span>
          <span class="it mln1"><svg class="ic"><use href="#lib"/></svg>钢筋图库</span>
          <span class="it mln1"><svg class="ic"><use href="#other"/></svg>其他<i class="ar tight"></i></span>
          <span class="it">关闭</span>
          <i class="sep s3"></i>
          <span class="it total">单构件钢筋总重(kg)：44.091</span>
        </div>
        <div class="gridframe">
          <div class="gridtop">
            <div class="gridclip">
              <table class="grid">
                <colgroup>
                  <col class="c33"><col class="c72"><col class="c56"><col class="c37"><col class="c33"><col class="c200"><col class="c167"><col class="c156"><col class="c61"><col class="c38"><col class="c39"><col class="c49"><col class="c61"><col class="c61"><col class="c11">
                </colgroup>
                <thead>
                  <tr><th></th><th class="hsel">筋号</th><th>直径(mm)</th><th>级别</th><th>图号</th><th>图形</th><th>计算公式</th><th>公式描述</th><th>长度(mm)</th><th>根数</th><th>搭接</th><th>损耗(%)</th><th>单重(kg)</th><th>总重(kg)</th><th></th></tr>
                </thead>
                <tbody>
                  <tr class="r1"><th class="rh rhsel">1*</th><td class="name namesel">横向钢筋.1</td><td>16</td><td class="g"><svg class="gr" viewBox="0 0 12 12"><path d="M2 7V4a4 3 0 0 1 8 0v3zM6 0v10M2 11h8" fill="none" stroke="#111"/></svg></td><td>0</td>
                    <td class="sh"><svg class="shape" viewBox="0 0 200 28"><text transform="translate(53 9) rotate(90)" class="s1">146</text><path d="M65 12v6M66 18h78" stroke="#111" fill="none"/><text x="110" y="30" class="s1 mid">1675</text></svg></td>
                    <td>1821</td><td class="cn">净长</td><td>1821</td><td>3</td><td>0</td><td>0</td><td>2.877</td><td>8.632</td><td class="cn">直筋</td></tr>
                  <tr class="r2"><th class="rh">2</th><td class="name">横向钢筋.2</td><td>25</td><td class="g"><svg class="gr" viewBox="0 0 12 12"><path d="M2 7V4a4 3 0 0 1 8 0v3zM6 0v10M2 11h8" fill="none" stroke="#111"/></svg></td><td>1</td>
                    <td class="sh"><div class="barv">1750</div><div class="bar"></div></td>
                    <td>1750</td><td class="cn">净长</td><td>1750</td><td>4</td><td>0</td><td>0</td><td>6.738</td><td>26.95</td><td class="cn">直筋</td></tr>
                  <tr class="r2"><th class="rh">3</th><td class="name">横向钢筋.3</td><td>8</td><td class="g"><svg class="gr" viewBox="0 0 12 12"><path d="M2 7V4a4 3 0 0 1 8 0v3zM6 0v10M2 11h8" fill="none" stroke="#111"/></svg></td><td>1</td>
                    <td class="sh"><div class="barv">130</div><div class="bar"></div></td>
                    <td>130</td><td class="cn">净长</td><td>130</td><td>2</td><td>0</td><td>0</td><td>0.051</td><td>0.103</td><td class="cn">直筋</td></tr>
                  <tr class="r2"><th class="rh">4</th><td class="name">横向钢筋.4</td><td>8</td><td class="g"><svg class="gr" viewBox="0 0 12 12"><path d="M2 7V4a4 3 0 0 1 8 0v3zM6 0v10M2 11h8" fill="none" stroke="#111"/></svg></td><td>1</td>
                    <td class="sh"><div class="barv">164</div><div class="bar"></div></td>
                    <td>164</td><td class="cn">净长</td><td>164</td><td>2</td><td>0</td><td>0</td><td>0.065</td><td>0.13</td><td class="cn">直筋</td></tr>
                  <tr class="r2"><th class="rh">5</th><td class="name">横向钢筋.5</td><td>8</td><td class="g"><svg class="gr" viewBox="0 0 12 12"><path d="M2 7V4a4 3 0 0 1 8 0v3zM6 0v10M2 11h8" fill="none" stroke="#111"/></svg></td><td>1</td>
                    <td class="sh"><div class="barv">197</div><div class="bar"></div></td>
                    <td>197</td><td class="cn">净长</td><td>197</td><td>2</td><td>0</td><td>0</td><td>0.078</td><td>0.156</td><td class="cn">直筋</td></tr>
                </tbody>
              </table>
            </div>
            <div class="gvbar"><span class="up-a">︿</span><div class="gvthumb"></div><span class="dn-a">﹀</span></div>
          </div>
          <div class="ghbar"><span class="harrow">‹</span><div class="ghthumb"></div><span class="harrow harr-r">›</span></div>
        </div>
      </div>
    </div>
  </section>
</main>

<div class="status">
  <span class="st st1">X=24588 Y=-13070</span>
  <span class="st st2">层高:2.8m</span>
  <span class="st st3">底标高:20.35m</span>
  <span class="st st4">1(2)</span>
  <span class="st st5">按鼠标左键指定第一个角点，或拾取构件图元</span>
  <span class="st st6">646.4 FPS</span>
</div>

<footer class="taskbar">
  <div class="startbtn"><svg class="winlogo" viewBox="0 0 16 16"><path d="M0 2.500l7-1v6H0zM8 1.300l8-1.200V7.500H8zM0 8.500h7v6l-7-1zM8 8.500h8v7.400l-8-1.200z" fill="#fff"/></svg></div>
  <div class="search">
    <i class="cortana"></i><span class="searchtext">在这里输入你要搜索的内容</span>
    <svg class="searchmic" viewBox="0 0 12 18"><path d="M3.500 1h5v10h-5zM1 8c0 6 10 6 10 0M6 14v3M3 17h6" fill="none" stroke="#8a8a8a"/></svg>
  </div>
  <div class="tile"><svg class="ti" viewBox="0 0 24 24"><path d="M6 7h12v11H6zM3 9v7M21 9v7" fill="none" stroke="#fff" stroke-width="1.200"/></svg></div>
  <div class="tile"><svg class="ti" viewBox="0 0 24 24"><path d="M12 12C6 14 1 11 2 6s8-6 10 6zM12 12c6-2 11 1 10 6s-8 6-10-6zM12 12c-2 6-7 10-10 7s-1-10 10-7zM12 12c2-6 7-10 10-7s1 10-10 7z" fill="#dedede"/></svg></div>
  <div class="tile"><svg class="ti" viewBox="0 0 24 24"><path d="M3 13h15c0-6-3-8-7-8-5 0-8 4-8 9 0 6 4 8 8 8 4 0 6-2 7-5h-5c-1 2-4 2-5 0z" fill="#eee"/><path d="M8 10h6c-1-2-5-2-6 0z" fill="#101a20"/><path d="M3 19C0 24 6 22 20 9c3-4 2-7-3-4" fill="none" stroke="#bbb"/></svg></div>
  <div class="tile"><svg class="ti" viewBox="0 0 24 24"><path d="M20 8c-2-5-9-6-13-3-5 4-4 12 1 14 5 2 10-1 10-6 0-4-5-6-8-3" fill="none" stroke="#aaa" stroke-width="1.500"/></svg></div>
  <div class="tile"><svg class="ti" viewBox="0 0 24 24"><path d="M2 12C3 5 8 1 13 1c6 0 10 4 10 11v2H8c1 5 9 5 13 2v5c-5 3-12 3-16-1-2-2-3-5-3-8zM8 10h9c0-5-8-5-9 0z" fill="#0e78d8"/></svg></div>
  <div class="tile"><svg class="ti" viewBox="0 0 24 24"><path d="M3 13h16c0-6-3-8-8-8-5 0-8 4-8 9 0 6 4 8 8 8 4 0 7-2 8-5h-5c-1 2-5 2-6 0z" fill="#3aa3e8"/><path d="M8 10h6c-1-2-5-2-6 0z" fill="#101a20"/><path d="M3 20C0 25 8 21 21 8c3-5-1-8-5-4" fill="none" stroke="#f0c020" stroke-width="1.500"/></svg></div>
  <div class="tile"><svg class="ti" viewBox="0 0 24 24"><path d="M3 5h7l2 2h9v15H3z" fill="#f5d266"/><path d="M3 11h18v11H3z" fill="#fbe59a"/><path d="M7 15h10v7h-3v-4h-4v4H7z" fill="#2b8fd8"/></svg></div>
  <div class="tile"><svg class="ti" viewBox="0 0 24 24"><path d="M17 1l4 1-3 3c3 5 2 12-3 15-5 3-11 1-12-4-1-6 3-12 9-13-3 3-5 6-4 9 0 3 3 4 5 2 2-3 1-7-2-9 2-1 4-2 6-4z" fill="#1f8fee"/></svg></div>
  <div class="tile active"><svg class="ti ti-big" viewBox="0 0 24 24"><rect x="1" y="1" width="22" height="22" rx="4" fill="#1594ea"/><path d="M12 5v14M6 12h5a3 3 0 1 0-3-3M18 12h-5" stroke="#fff" stroke-width="2" fill="none"/></svg></div>
  <div class="tile"><svg class="ti" viewBox="0 0 24 24"><circle cx="12" cy="13" r="10" fill="#7ec238"/><circle cx="12" cy="13" r="6" fill="#eef5e0"/><path d="M7 13h10M8 10h8M8 16h8" stroke="#7ec238" stroke-width="1.500"/><path d="M14 3l5-2" stroke="#6aa82f" stroke-width="2"/></svg></div>
  <span class="tray-link">链接</span>
  <div class="cpu"><span>26%</span><span>CPU使用</span></div>
  <div class="tray">
    <svg class="tr wifi-g" viewBox="0 0 18 16"><path d="M1 6c5-5 11-5 16 0M4 9.500c3-3 7-3 10 0M7 12.500c1-1 3-1 4 0" fill="none" stroke="#7ed321" stroke-width="2"/><circle cx="9" cy="15" r="1" fill="#7ed321"/></svg>
    <svg class="tr caret" viewBox="0 0 14 14"><path d="M1 10l6-6 6 6" stroke="#fff" fill="none" stroke-width="1.200"/></svg>
    <svg class="tr batt" viewBox="0 0 18 16"><rect x="3" y="5" width="13" height="9" fill="#ddd" stroke="#fff"/><path d="M16 8h2v3h-2M5 0v4h4V0" fill="none" stroke="#fff"/><rect x="4" y="6" width="5" height="7" fill="#fff"/></svg>
    <svg class="tr wifi2" viewBox="0 0 16 16"><path d="M1 15C1 8 7 2 15 1M5 15c0-5 4-9 10-10M9 15c0-3 2-5 6-6M12 15c0-1 1-2 3-2" stroke="#ccc" fill="none"/></svg>
    <svg class="tr vol" viewBox="0 0 18 16"><path d="M1 5h3l4-4v14l-4-4H1z" fill="none" stroke="#fff"/><path d="M11 5c1 2 1 4 0 6M14 3c2 3 2 7 0 10" stroke="#ccc" fill="none"/></svg>
    <svg class="tr kbd" viewBox="0 0 24 14"><rect x=".5" y=".5" width="23" height="13" fill="none" stroke="#fff"/><path d="M3 4h18M3 7h18M7 10.500h10" stroke="#fff" stroke-dasharray="1.500 1"/></svg>
    <span class="ime">中</span>
    <svg class="tr sg" viewBox="0 0 16 18"><rect x="1" y="1" width="14" height="16" rx="3" fill="#ee4d23"/><path d="M12 5H6v4h5v4H4" stroke="#fff" stroke-width="2" fill="none"/></svg>
  </div>
  <div class="clock"><span>18:48</span><span>2018/6/7</span></div>
  <div class="notif"><svg class="nic" viewBox="0 0 16 16"><path d="M1 1h14v11H7l-3 3v-3H1z" fill="#fff"/><path d="M3 4h10M3 6.500h10M3 9h7" stroke="#101a20"/></svg><span class="nbadge">1</span></div>
</footer>

<!-- overlays -->
<div class="ball">63</div>
<div class="wifi">
  <svg class="wifibig" viewBox="0 0 38 38"><circle cx="19" cy="19" r="19" fill="#22cc70"/><path d="M7 16c7-7 17-7 24 0M11 20c5-5 11-5 16 0M15 24c2-2 6-2 8 0" fill="none" stroke="#fff" stroke-width="2.500"/><circle cx="19" cy="29" r="2" fill="#fff"/></svg>
  <div class="wifiinfo">
    <div class="wline"><svg class="wmini" viewBox="0 0 8 14"><path d="M2 1v11" stroke="#22cc70" stroke-width="2"/><path d="M6 13V2" stroke="#f08020" stroke-width="2"/></svg>0.00K/s</div>
    <div class="wline"><svg class="wmini" viewBox="0 0 8 14"><path d="M3 0h2v2H3z" fill="#22cc70"/><rect x="1" y="2.500" width="6" height="10" fill="#fff" stroke="#22cc70"/><rect x="1" y="6" width="6" height="7" fill="#22cc70"/></svg>0</div>
  </div>
</div>
<div class="sogou">
  <svg class="sglogo" viewBox="0 0 26 26"><rect x="2" y="2" width="22" height="22" rx="4" fill="#f0501e" transform="rotate(-10 13 13)"/><path d="M19 8C14 6 7 7 8 11c1 3 10 1 10 6 0 3-7 3-12 1" stroke="#fff" stroke-width="3.500" fill="none"/></svg>
  <span class="sgt">中</span>
  <span class="sgt sgd">°,</span>
  <svg class="sgi" viewBox="0 0 14 14"><circle cx="7" cy="7" r="6" fill="none" stroke="#2f7fd6" stroke-width="1.500"/><path d="M4 8.500c1.500 2 4.500 2 6 0M5 5v1M9 5v1" stroke="#2f7fd6" fill="none"/></svg>
  <svg class="sgi" viewBox="0 0 14 14"><rect x="4.500" y="0" width="5" height="9" rx="2.500" fill="#2f7fd6"/><path d="M2 6c0 6 10 6 10 0M7 11v3M4 14h6" stroke="#2f7fd6" fill="none"/></svg>
  <svg class="sgi" viewBox="0 0 16 14"><rect x=".5" y="1.500" width="15" height="11" rx="1" fill="#2f7fd6"/><path d="M3 5h10M3 7.500h10M5 10h6" stroke="#fff" stroke-dasharray="1.500 1"/></svg>
  <svg class="sgi" viewBox="0 0 16 14"><circle cx="7" cy="4" r="3" fill="#b8c4cf"/><path d="M1 14c0-6 12-6 12 0z" fill="#b8c4cf"/><path d="M9 9h7v5H9z" fill="#8899a8"/></svg>
  <svg class="sgi" viewBox="0 0 14 14"><path d="M4 0L0 3l2 3 1-1v9h8V5l1 1 2-3-4-3c-1 2-5 2-6 0z" fill="#2f7fd6"/></svg>
  <svg class="sgi" viewBox="0 0 14 14"><path d="M13 4a4 4 0 0 1-5 4l-5 6-2-2 6-5a4 4 0 0 1 5-6L9 4l2 2z" fill="#2f7fd6"/></svg>
</div>
</body>
</html>
```

FILE: styles.css
```css
* { box-sizing: border-box; }
html, body { margin: 0; padding: 0; }
body {
  width: 1366px; height: 768px; overflow: hidden; position: relative;
  background: #f0f0f0; color: #111;
  font: 12px/16px "Liberation Sans", "Noto Sans CJK SC", sans-serif;
}
.defs { display: none; }
i { font-style: normal; }

/* title */
.titlebar { height: 23px; background: #fff; display: flex; align-items: center; padding-left: 2px; position: relative; white-space: nowrap; overflow: hidden; }
.applogo { width: 17px; height: 17px; flex: none; margin-right: 4px; }
.apptitle { font: 12px/16px "Noto Sans", "Noto Sans CJK SC", sans-serif; letter-spacing: .3px; color: #222; }
.winctl { margin-left: auto; display: flex; flex: none; gap: 34px; padding-right: 19px; background: #fff; padding-left: 30px; }
.wbtn { width: 12px; height: 12px; }

.topband { height: 31px; display: flex; padding: 1px 0 2px 937px; }
.newstab { width: 160px; background: linear-gradient(#fbfbfb, #f0f0f0); color: #5a3000; padding: 6px 0 0 29px; font-size: 12px; border-radius: 3px 3px 0 0; }
.coins { flex: 1; margin-left: 3px; background: linear-gradient(#fbfbfb, #f0f0f0); display: flex; align-items: flex-start; padding: 4px 0 0 26px; position: relative; }
.userbadge { width: 14px; height: 22px; flex: none; }
.coinlabel { margin-left: 108px; padding-top: 2px; }
.bell { width: 11px; height: 16px; margin: 2px 0 0 11px; }
.more { font: 700 12px/12px "Liberation Sans", sans-serif; color: #111; }
.morer { margin-left: auto; padding-right: 3px; }

.tb1 { height: 30px; display: flex; align-items: flex-start; }
.grp { display: flex; align-items: center; height: 100%; background: linear-gradient(#fcfcfc, #f1f1f1); }
.tb1 .grp { height: 24px; gap: 8px; padding-top: 3px; }
.g-a { width: 152px; padding-left: 4px; }
.g-a .more { margin-left: auto; padding: 0 4px 10px 0; }
.g-b { width: 549px; margin-left: 1px; padding-left: 4px; }
.g-b .more { margin-left: auto; padding: 0 2px 10px 0; }
.g-c { flex: 1; margin-left: 2px; padding-left: 2px; }
.g-c .more { margin-left: auto; padding: 0 3px 10px 0; }
.floorsep { margin-left: 93px !important; }
.mln2 { margin-left: -2px; }
.mln1 { margin-left: -1px; }

.it { display: inline-flex; align-items: center; gap: 4px; white-space: nowrap; flex: none; color: #111; }
.off { color: #9b9b9b; }
.ic { width: 16px; height: 16px; flex: none; }
.ic.n { width: 14px; }
.ic.x10 { width: 10px; }
.sigma { font: 700 14px/16px "Liberation Serif", serif; text-align: center; }
.ar { display: inline-block; width: 0; height: 0; border: 3px solid transparent; border-top: 4px solid #111; border-bottom: 0; margin-left: 1px; flex: none; }
.ar.tight { margin-left: -1px; }
.ar-b { margin: 0 0 0 -4px; }
.fieldit { background: #fff; height: 24px; padding: 0 3px 0 2px; margin: -3px 0 0 -2px; }
.fieldit > .ic { margin-top: 3px; }
.sep { width: 1px; height: 18px; background: #bdbdbd; margin: 0 -1px; flex: none; }
.grip { width: 3px; height: 18px; flex: none; background: radial-gradient(circle at 50% 50%, #aaa 1px, transparent 1.200px) 0 0/3px 4px; }

/* main */
.main { display: flex; height: 625px; }
.side { width: 259px; flex: none; }
.navtitle { width: 254px; height: 15px; border: 1px solid #8a8a8a; display: flex; justify-content: space-between; line-height: 13px; padding: 0 4px 0 1px; background: #f3f3f3; }
.navbtns { display: flex; gap: 9px; align-items: center; }
.navbtns b { font-weight: 400; }
.pin { width: 10px; height: 12px; }
.navbtn { width: 252px; margin-left: 1px; height: 23px; border: 1px solid #a8a8a8; border-top-color: #bbb; line-height: 23px; text-align: center; background: #f2f2f2; margin-top: 0; }
.navtitle + .navbtn { margin-top: 1px; }
.treebox { width: 252px; height: 515px; margin-left: 1px; border: 1px solid #9b9b9b; border-top: 1px solid #ccc; background: #fff; padding-left: 1px; overflow: hidden; }
.treetools { height: 26px; display: flex; align-items: center; gap: 3px; padding: 0 0 0 3px; background: linear-gradient(#fafafa, #fff); }
.tt { width: 20px; height: 16px; }
.treearea { display: flex; height: 487px; }
.tree { flex: none; width: 233px; padding-top: 2px; height: 486px; overflow: hidden; }
.pnode, .leaf { height: 16px; display: flex; align-items: center; white-space: nowrap; font-family: "Liberation Serif", "Noto Sans CJK SC", serif; }
.pnode { padding-left: 9px; }
.chev { width: 8px; height: 8px; flex: none; position: relative; }
.chev::before { content: ""; display: block; width: 6px; height: 6px; border: solid #444; border-width: 0 2px 2px 0; margin: -2px 0 0 1px; transform: rotate(45deg); }
.chev.closed::before { transform: rotate(-45deg); border-color: #aaa; margin: 0 0 0 -1px; }
.hc { width: 6px; border-top: 1px dotted #777; margin: 0 1px 0 0; flex: none; }
.fld { width: 16px; height: 14px; margin-right: 3px; flex: none; }
.kids {
  background:
    linear-gradient(#888 50%, transparent 50%) 13px 0/1px 2px repeat-y,
    linear-gradient(#888 50%, transparent 50%) 32px 0/1px 2px repeat-y;
}
.leaf { padding-left: 32px; }
.leaf.last { background: linear-gradient(#fff, #fff) 32px 9px/1px 7px no-repeat; }
.conn { width: 11px; border-top: 1px dotted #777; flex: none; }
.lic { width: 16px; height: 16px; flex: none; margin-right: 4px; }
.selrow { display: inline-flex; align-items: center; background: #d9d9d9; padding-right: 2px; }
.minii { width: 15px; height: 15px; flex: none; }
.newtag { font: italic 700 8px/8px "Liberation Sans", sans-serif; background: #ffe600; color: #111; padding: 0 1px; margin: -7px 0 0 1px; }
.vbar { width: 16px; flex: none; background: #f0f0f0; display: flex; flex-direction: column; height: 486px; margin-left: 2px; align-items: center; }
.up-a, .dn-a { height: 16px; line-height: 16px; font-size: 8px; color: #555; font-weight: 700; flex: none; overflow: hidden; }
.vtrack { flex: 1; width: 16px; padding-top: 121px; padding-bottom: 12px; display: flex; }
.vthumb { width: 16px; background: #cdcdcd; flex: 1; }
.lowerbtn { margin-top: 0; }
.treebox + .lowerbtn { margin-top: 1px; height: 22px; line-height: 20px; }
.lowerbtn + .lowerbtn { line-height: 21px; }

/* work */
.work { flex: 1; min-width: 0; padding-left: 1px; }
.row2 { height: 23px; display: flex; }
.row3 { height: 25px; margin-top: 4px; display: flex; }
.row4 { height: 26px; margin-top: 4px; display: flex; }
.row2 .grp { gap: 8px; padding-top: 3px; }
.row3 .grp, .row4 .grp { gap: 8px; padding-top: 1px; }
.g-edit { width: 791px; padding-left: 4px; }
.g-edit .grip { margin-right: -5px; }
.g-layer { width: 568px; padding-left: 3px; }
.g-layer .grip-first { margin-right: -5px; }
.g-layer .sep { margin-right: 0; }
.g-layer .toggled { margin-left: -4px; }
.listit { margin-left: -10px; }
.g-axis { width: 423px; margin-left: 73px; padding-left: 3px; }
.axisfirst { margin-left: -3px; }
.g-draw { width: 523px; padding-left: 8px; }
.combo { display: inline-flex; flex: none; margin-right: -5px; }
.row3 .combo { height: 25px; margin-top: -1px; }
.row4 .combo { height: 26px; margin-top: -1px; }
.cv { background: #fff; padding: 5px 0 0 2px; flex: 1; }
.ca { width: 12px; display: flex; align-items: center; justify-content: center; background: #f2f2f2; }
.ca .ar { margin: 0; }
.c1 { width: 57px; }
.c2 { width: 68px; }
.c6 { width: 70px; }
.c3 { width: 69px; }
.c4 { width: 55px; margin-left: -3px; margin-right: -2px; }
.c5 { width: 53px; height: 25px; margin-right: 0; }
.toggled { border: 1px solid #0a7bd8; background: #dcebf7; }
.row3 .toggled { height: 23px; padding: 0 3px; }
.sel-btn { height: 24px; width: 51px; padding: 0 0 0 5px; gap: 7px; }
.ar-s { margin: 0 -1px 0 -5px; }
.blankbox { width: 24px; height: 26px; background: linear-gradient(#fff, #f0f0f0); margin-left: -3px; }
.canvas { display: block; width: 1107px; height: 305px; margin: 2px 0 0 -1px; }
.ax { font: 12px "Liberation Sans", sans-serif; }
.axz { fill: #0a7cff; } .axy { fill: #1fa01f; } .axx { fill: #d00; }
.gridlabel { font: 13px "Liberation Sans", sans-serif; fill: #ddd; text-anchor: middle; }

.snapwrap { height: 25px; margin-top: 2px; padding-left: 211px; display: flex; }
.g-snap { width: 675px; padding-left: 2px; gap: 4px; }
.g-snap .it { gap: 4px; }
.g-snap .it:first-of-type { margin: 0 0 0 1px; }
.sn { width: 51px; height: 23px; justify-content: center; padding: 0; }
.sn + .sn { margin-left: -4px; }
.coordit { margin-left: 3px; }
.g-snap .gs2 { margin: 0 1px 0 4px; }
.xlbl { margin-left: 1px; }
.lbl { color: #8a8a8a; white-space: nowrap; }
.spin { height: 23px; border: 1px solid #777; display: flex; align-items: center; background: #f0f0f0; flex: none; }
.w58 { width: 58px; }
.w68 { width: 68px; }
.spv { flex: 1; text-align: right; padding-right: 10px; color: #888; }
.spa { width: 11px; display: flex; flex-direction: column; font-size: 8px; line-height: 9px; color: #444; }
.chk { width: 11px; height: 11px; border: 1px solid #777; flex: none; }
.rotlbl { margin: 0 0 0 5px; white-space: nowrap; }
.deg { margin-left: 1px; }

.lower { display: flex; height: 203px; margin-top: 5px; margin-left: -1px; }
.gutter { width: 13px; flex: none; background: radial-gradient(circle, #bbb 1px, transparent 1.200px) 0 13px/4px 4px; }
.gutx { display: block; width: 10px; height: 12px; border: 1px solid #555; background: linear-gradient(45deg, #e8dcc8 45%, #a33 50%, #e8dcc8 55%); }
.lowermain { flex: 1; min-width: 0; padding-top: 3px; }
.g-bar { height: 21px; gap: 8px; padding-left: 6px; background: linear-gradient(#fcfcfc, #f2f2f2); }
.ic12 { width: 12px; height: 12px; flex: none; margin-right: 4px; }
.g-bar .s1 { margin: 0 -1px 0 -6px; }
.g-bar .s2 { margin: 0 -5px 0 -3px; }
.g-bar .s3 { margin: 0 -3px 0 0; }
.gridframe { margin-top: 4px; height: 173px; border: 1px solid #a0a0a0; background: #f0f0f0; border-right: 0; }
.gridtop { display: flex; height: 154px; }
.gridclip { width: 1074px; height: 154px; overflow: hidden; flex: none; }
.grid { border-collapse: collapse; table-layout: fixed; width: 1074px; margin-left: -1px; font-family: "Liberation Serif", "Noto Sans CJK SC", serif; }
.c33 { width: 33px; } .c72 { width: 72px; } .c56 { width: 56px; } .c37 { width: 37px; } .c200 { width: 200px; }
.c167 { width: 167px; } .c156 { width: 156px; } .c61 { width: 61px; } .c38 { width: 38px; } .c39 { width: 39px; } .c49 { width: 49px; } .c11 { width: 11px; }
.grid th, .grid td { border: 1px solid #bcbcbc; padding: 0 2px; font-weight: 400; white-space: nowrap; overflow: hidden; }
.grid thead th { height: 19px; padding-top: 2px; line-height: 14px; background: linear-gradient(#fff, #e9e9e9); text-align: center; border-top: 0; }
.grid thead th.hsel { background: linear-gradient(#fbdf9f, #f4c46c); color: #6a0f6a; }
.grid td { background: #ccffd8; height: 29px; }
.rh { background: linear-gradient(#fff, #e8e8e8); text-align: center; }
.rhsel { background: #ffd58c; color: #6a0f6a; }
.grid td.name { border-right: 1px solid #000; padding-left: 1px; font-family: "Noto Sans CJK SC", sans-serif; }
.grid td.namesel { background: #aee9d5; }
.g { text-align: center; }
.gr { width: 12px; height: 12px; vertical-align: middle; }
.cn { font-family: "Noto Sans CJK SC", sans-serif; }
.grid td.sh { padding: 0; text-align: center; vertical-align: top; }
.shape { width: 200px; height: 28px; display: block; }
.s1 { font: 11px "Liberation Serif", serif; fill: #111; }
.s1.mid { text-anchor: middle; }
.barv { color: #f00; height: 15px; line-height: 15px; margin-top: 4px; }
.bar { width: 150px; height: 2px; background: #000; margin: 0 auto; }
.gvbar { width: 16px; flex: none; display: flex; flex-direction: column; align-items: center; padding-top: 13px; background: #f0f0f0; height: 154px; }
.gvbar .up-a { height: 5px; line-height: 5px; }
.gvthumb { width: 16px; height: 17px; background: #cdcdcd; margin-top: 1px; }
.gvbar .dn-a { margin-top: auto; }
.ghbar { display: flex; height: 16px; width: 1074px; align-items: center; background: #f0f0f0; }
.harrow { width: 17px; text-align: center; flex: none; font-weight: 700; color: #555; font-size: 13px; }
.ghthumb { width: 690px; height: 16px; background: #cdcdcd; }
.harr-r { margin-left: auto; }

/* status */
.status { height: 20px; display: flex; gap: 2px; padding: 0 0 1px; border-top: 1px solid #fff; }
.st { height: 19px; background: #f3f3f3; border: 1px solid #e2e2e2; line-height: 17px; padding-left: 1px; white-space: nowrap; font-family: "Liberation Serif", "Noto Sans CJK SC", serif; }
.st1 { width: 148px; } .st2 { width: 78px; } .st3 { width: 98px; } .st4 { width: 48px; } .st5 { width: 914px; } .st6 { flex: 1; }

/* taskbar */
.taskbar { height: 40px; background: #0b1a22; display: flex; align-items: stretch; color: #eee; }
.startbtn { width: 48px; background: #000; display: flex; align-items: center; justify-content: center; flex: none; }
.winlogo { width: 16px; height: 16px; }
.search { width: 344px; background: #333; display: flex; align-items: center; flex: none; padding-left: 10px; }
.cortana { width: 20px; height: 20px; border: 3px solid #ddd; border-radius: 50%; flex: none; }
.searchtext { color: #a0a0a0; margin-left: 6px; font-family: "Noto Sans CJK SC", sans-serif; font-size: 14px; }
.searchmic { width: 12px; height: 18px; margin-left: auto; margin-right: 15px; }
.tile { width: 50px; display: flex; align-items: center; justify-content: center; flex: none; position: relative; }
.ti { width: 24px; height: 24px; }
.ti-big { width: 26px; height: 26px; }
.tile:nth-of-type(10), .tile.active, .tile:nth-of-type(12) { border-bottom: 2px solid #6fb3e8; }
.tile.active { background: #2b3a42; }
.tray-link { width: 47px; margin-left: 10px; color: #ddd; align-self: center; flex: none; font-family: "Noto Sans CJK SC", sans-serif; font-size: 12px; text-align: center; }
.cpu { display: flex; flex-direction: column; align-items: center; justify-content: center; width: 72px; flex: none; line-height: 17px; font-size: 12px; color: #eee; margin-left: -3px; }
.tray { display: flex; align-items: center; flex: none; width: 216px; gap: 0; padding-left: 10px; }
.tr { flex: none; }
.wifi-g { width: 18px; height: 16px; margin-right: 10px; }
.caret { width: 14px; height: 14px; margin-right: 10px; }
.batt { width: 18px; height: 16px; margin-right: 8px; }
.wifi2 { width: 14px; height: 16px; margin-right: 8px; }
.vol { width: 16px; height: 16px; margin-right: 9px; }
.kbd { width: 24px; height: 14px; margin-right: 10px; }
.ime { font-family: "Noto Sans CJK SC", sans-serif; font-size: 13px; color: #fff; width: 14px; margin-right: 13px; }
.sg { width: 16px; height: 18px; }
.clock { width: 60px; display: flex; flex-direction: column; align-items: center; justify-content: center; flex: none; font-size: 13px; line-height: 18px; margin-left: 12px; }
.notif { flex: 1; display: flex; align-items: center; justify-content: center; position: relative; padding-right: 6px; }
.nic { width: 16px; height: 16px; margin-top: -4px; }
.nbadge { position: absolute; left: 27px; top: 19px; width: 15px; height: 15px; border-radius: 50%; background: #333; color: #fff; text-align: center; font-size: 11px; line-height: 15px; font-weight: 700; }

/* overlays */
.ball { position: absolute; left: 1131px; top: -29px; width: 47px; height: 47px; border-radius: 50%; background: radial-gradient(circle at 50% 30%, #62d060, #3cb04a); border: 2px solid #e8f3e8; box-shadow: 0 1px 3px rgba(0,0,0,.5); color: #fff; font-size: 11px; text-align: center; line-height: 14px; padding-top: 29px; font-weight: 700; }
.wifi { position: absolute; left: 1132px; top: 30px; width: 120px; height: 50px; border-radius: 25px; background: #fff; border: 1px solid #ddd; box-shadow: 0 2px 5px rgba(0,0,0,.25); display: flex; align-items: center; padding-left: 5px; }
.wifibig { width: 38px; height: 38px; flex: none; }
.wifiinfo { margin-left: 7px; display: flex; flex-direction: column; gap: 4px; color: #777; font-size: 11px; }
.wline { display: flex; align-items: center; gap: 6px; height: 16px; }
.wmini { width: 8px; height: 14px; }
.sogou { position: absolute; left: 701px; top: 14px; width: 195px; height: 24px; background: #fff; border: 1px solid #a9c8e8; display: flex; align-items: center; padding-left: 21px; gap: 8px; }
.sglogo { position: absolute; left: -13px; top: -3px; width: 27px; height: 27px; }
.sgt { color: #2f7fd6; font-weight: 700; font-size: 14px; width: 15px; font-family: "Noto Sans CJK SC", sans-serif; }
.sgd { width: 15px; margin-left: 1px; }
.sgi { width: 14px; height: 15px; flex: none; margin-left: 1px; }
```
